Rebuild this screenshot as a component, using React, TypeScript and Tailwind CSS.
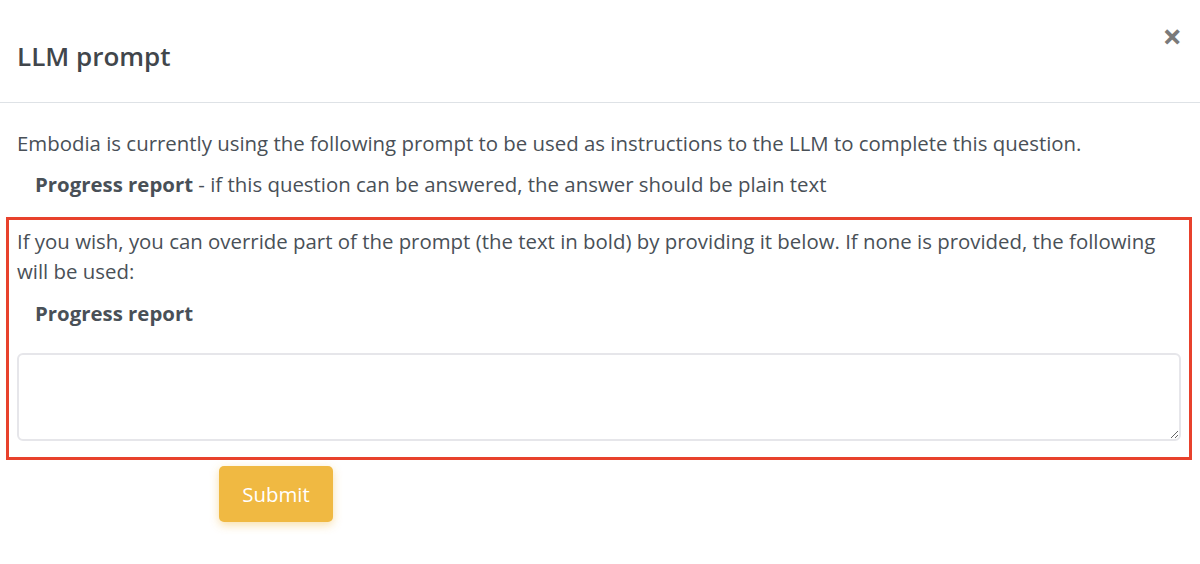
import React, { useState } from 'react';

const App: React.FC = () => {
  const [override, setOverride] = useState('');

  return (
    <div className="min-h-[564px] w-[1200px] bg-white text-[#495057]" style={{ fontFamily: '"Open Sans", Lato, sans-serif' }}>
      {/* Header */}
      <div className="flex h-[103px] items-start justify-between border-b border-[#dee2e6] pl-[17px] pr-[18px]">
        <h1 className="mt-[39px] text-[26px] font-semibold leading-[34px] text-[#41464b]">LLM prompt</h1>
        <button className="mt-[19px] text-[34px] font-bold leading-[34px] text-[#7a7a7a]">×</button>
      </div>

      {/* Body */}
      <div className="px-[6px] pt-[25px]">
        <p className="pl-[11px] text-[20.4px] leading-[30px]">
          Embodia is currently using the following prompt to be used as instructions to the LLM to complete this question.
        </p>
        <p className="mt-[11px] pl-[29px] text-[20.4px] leading-[30px]">
          <span className="font-bold">Progress report</span> - if this question can be answered, the answer should be plain text
        </p>

        <div className="mt-[18px] w-[1186px] border-[3px] border-[#e8412c] px-[8px] pb-[16px] pt-[6px]">
          <p className="text-[20.4px] leading-[30px]">
            If you wish, you can override part of the prompt (the text in bold) by providing it below. If none is provided, the following will be used:
          </p>
          <p className="mt-[12px] pl-[18px] text-[20.4px] font-bold leading-[30px]">Progress report</p>
          <textarea
            value={override}
            onChange={e => setOverride(e.target.value)}
            className="mt-[25px] block h-[88px] w-full rounded-[6px] border-2 border-[#e6e6ea] px-3 py-2 text-[20px] outline-none"
          />
        </div>

        <div className="pl-[213px] pt-[6px]">
          <button className="h-[56px] w-[114px] rounded-[5px] bg-[#f0b942] text-[20.4px] text-white shadow-[0_3px_10px_rgba(240,185,66,0.45)]">
            Submit
          </button>
        </div>
      </div>
    </div>
  );
};

export default App;
